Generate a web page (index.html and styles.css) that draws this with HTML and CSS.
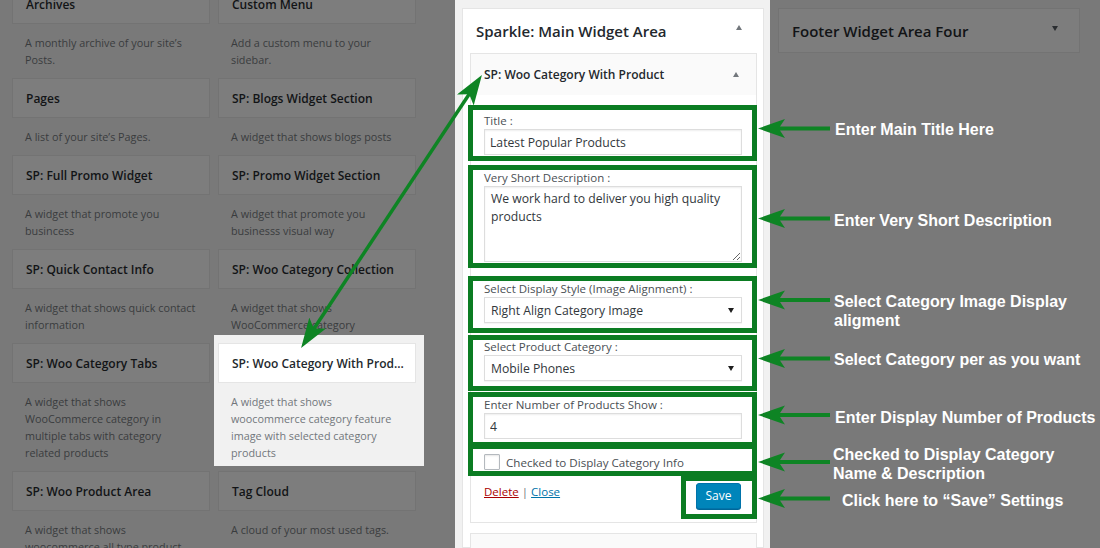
FILE: index.html
```html
<!DOCTYPE html>
<html lang="en">
<head>
<meta charset="utf-8">
<title>Widgets</title>
<link rel="stylesheet" href="styles.css">
</head>
<body>
<div class="page">
  <div class="available">
    <div class="col">
      <div class="w-title">Archives</div>
      <div class="w-desc">A monthly archive of your site’s<br>Posts.</div>
      <div class="w-title">Pages</div>
      <div class="w-desc">A list of your site’s Pages.</div>
      <div class="w-title">SP: Full Promo Widget</div>
      <div class="w-desc">A widget that promote you<br>busincess</div>
      <div class="w-title">SP: Quick Contact Info</div>
      <div class="w-desc">A widget that shows quick contact<br>information</div>
      <div class="w-title">SP: Woo Category Tabs</div>
      <div class="w-desc">A widget that shows<br>WooCommerce category in<br>multiple tabs with category<br>related products</div>
      <div class="w-title">SP: Woo Product Area</div>
      <div class="w-desc">A widget that shows<br>woocommerce all type product</div>
    </div>
    <div class="col">
      <div class="w-title">Custom Menu</div>
      <div class="w-desc">Add a custom menu to your<br>sidebar.</div>
      <div class="w-title">SP: Blogs Widget Section</div>
      <div class="w-desc">A widget that shows blogs posts</div>
      <div class="w-title">SP: Promo Widget Section</div>
      <div class="w-desc">A widget that promote you<br>businesss visual way</div>
      <div class="w-title">SP: Woo Category Collection</div>
      <div class="w-desc">A widget that shows<br>WooCommerce category</div>
      <div class="hl">
        <div class="w-title">SP: Woo Category With Prod...</div>
        <div class="w-desc">A widget that shows<br>woocommerce category feature<br>image with selected category<br>products</div>
      </div>
      <div class="w-title">Tag Cloud</div>
      <div class="w-desc">A cloud of your most used tags.</div>
    </div>
  </div>

  <div class="main-col">
    <div class="sidebar">
      <div class="sb-head">
        <h2 class="sb-title">Sparkle: Main Widget Area</h2>
        <span class="tri-up"></span>
      </div>
      <div class="ow">
        <div class="ow-head">
          <span>SP: Woo Category With Product</span>
          <span class="tri-up small"></span>
        </div>
        <div class="ow-inside">
          <div class="field f-title">
            <label class="f-label">Title :</label>
            <input class="f-input" type="text" value="Latest Popular Products">
          </div>
          <div class="field f-desc">
            <label class="f-label">Very Short Description :</label>
            <textarea class="f-area">We work hard to deliver you high quality products</textarea>
          </div>
          <div class="field f-sel">
            <label class="f-label">Select Display Style (Image Alignment) :</label>
            <div class="f-select"><span>Right Align Category Image</span><span class="tri-down dark"></span></div>
          </div>
          <div class="field f-sel">
            <label class="f-label">Select Product Category :</label>
            <div class="f-select"><span>Mobile Phones</span><span class="tri-down dark"></span></div>
          </div>
          <div class="field f-num">
            <label class="f-label">Enter Number of Products Show :</label>
            <input class="f-input" type="text" value="4">
          </div>
          <div class="check-row">
            <span class="checkbox"></span>
            <span>Checked to Display Category Info</span>
          </div>
          <div class="actions">
            <div class="links"><a class="del" href="#">Delete</a> <span class="sep">|</span> <a class="close" href="#">Close</a></div>
            <button class="save" type="button">Save</button>
          </div>
        </div>
      </div>
      <div class="next-widget"></div>
    </div>
  </div>

  <div class="right-col">
    <div class="footer-area">
      <span>Footer Widget Area Four</span>
      <span class="tri-down"></span>
    </div>
  </div>

  <div class="annot">
    <div class="gbox gb1"></div>
    <div class="gbox gb2"></div>
    <div class="gbox gb3"></div>
    <div class="gbox gb4"></div>
    <div class="gbox gb5"></div>
    <div class="gbox gb6"></div>
    <div class="gbox gb7"></div>

    <svg class="arrows" width="1100" height="548" viewBox="0 0 1100 548">
      <defs>
        <path id="ha" d="M0 0 L27 -9.5 L22 -2 L72 -2 L72 2 L22 2 L27 9.5 Z"/>
        <marker id="dh" markerUnits="userSpaceOnUse" viewBox="0 0 30 20" markerWidth="30" markerHeight="20" refX="20" refY="10" orient="auto-start-reverse">
          <path d="M0 0 L30 10 L0 20 L7 10 Z" fill="#0e8424"/>
        </marker>
      </defs>
      <g fill="#0e8424">
        <use href="#ha" x="758" y="128.5"/>
        <use href="#ha" x="758" y="218.5"/>
        <use href="#ha" x="758" y="300"/>
        <use href="#ha" x="758" y="358.5"/>
        <use href="#ha" x="758" y="415"/>
        <use href="#ha" x="758" y="462"/>
        <use href="#ha" x="758" y="498.5"/>
      </g>
      <line x1="306.6" y1="339.7" x2="476.4" y2="83.3" stroke="#0e8424" stroke-width="3.5" marker-start="url(#dh)" marker-end="url(#dh)"/>
    </svg>

    <div class="note n1">Enter Main Title Here</div>
    <div class="note n2">Enter Very Short Description</div>
    <div class="note n3">Select Category Image Display<br>aligment</div>
    <div class="note n4">Select Category per as you want</div>
    <div class="note n5">Enter Display Number of Products</div>
    <div class="note n6">Checked to Display Category<br>Name &amp; Description</div>
    <div class="note n7">Click here to “Save” Settings</div>
  </div>
</div>
</body>
</html>
```

FILE: styles.css
```css
* { box-sizing: border-box; margin: 0; padding: 0; }

html, body {
  width: 1100px;
  height: 548px;
  overflow: hidden;
}

body {
  font-family: "Open Sans", "Noto Sans", sans-serif;
  background: #797979;
  color: #23282d;
}

.page {
  position: relative;
  display: flex;
  width: 1100px;
  height: 548px;
  overflow: hidden;
}

/* ---------- available widgets (dimmed) ---------- */
.available {
  width: 455px;
  flex: none;
  display: flex;
  align-items: flex-start;
  gap: 8px;
  padding-left: 12px;
  margin-top: -16px;
}

.col {
  width: 198px;
  display: flex;
  flex-direction: column;
}

.w-title {
  height: 40px;
  border: 1px solid #737373;
  background: #7d7d7d;
  padding: 2px 13px 0;
  font-size: 12px;
  font-weight: 600;
  line-height: 36px;
  color: #121416;
  white-space: nowrap;
}

.w-desc {
  padding: 10px 6px 10px 13px;
  font-size: 10.8px;
  line-height: 17px;
  color: #393c3e;
  white-space: nowrap;
}

.hl {
  background: #f1f1f1;
  margin: -8px -8px 5px -4px;
  padding: 8px 8px 0 4px;
}

.hl .w-title {
  background: #fff;
  border-color: #e5e5e5;
  color: #23282d;
}

.hl .w-desc {
  color: #72777c;
  padding-bottom: 5px;
}

/* ---------- main sidebar (highlighted) ---------- */
.main-col {
  width: 315px;
  flex: none;
  background: #f1f1f1;
  padding: 8px 6px 0 7px;
}

.sidebar {
  background: #fff;
  border: 1px solid #e5e5e5;
  height: 100%;
  padding: 0 6px 0 7px;
}

.sb-head {
  height: 44px;
  display: flex;
  align-items: center;
  justify-content: space-between;
  padding: 0 15px 0 6px;
}

.sb-title {
  font-size: 15px;
  font-weight: 600;
  color: #23282d;
  line-height: 20px;
}

.tri-up {
  width: 0;
  height: 0;
  border-left: 3.5px solid transparent;
  border-right: 3.5px solid transparent;
  border-bottom: 5px solid #72777c;
  margin-top: -7px;
}

.tri-up.small {
  margin-top: -1px;
}

.tri-down {
  width: 0;
  height: 0;
  border-left: 3.5px solid transparent;
  border-right: 3.5px solid transparent;
  border-top: 5px solid #2b2e31;
  margin-top: -5px;
}

.tri-down.dark {
  border-top-color: #1e1e1e;
  margin-top: 0;
}

.ow {
  border: 1px solid #e5e5e5;
  margin-bottom: 10px;
}

.ow-head {
  height: 41px;
  background: #fafafa;
  display: flex;
  align-items: center;
  justify-content: space-between;
  padding: 0 17px 0 13px;
  font-size: 12px;
  font-weight: 600;
  color: #23282d;
}

.ow-inside {
  background: #fff;
  padding: 18px 14px 13px 13px;
  display: flex;
  flex-direction: column;
}

.field {
  display: flex;
  flex-direction: column;
}

.f-title { margin-bottom: 15px; }
.f-desc { margin-bottom: 19px; }
.f-sel { margin-bottom: 16px; }
.f-num { margin-bottom: 15px; }

.f-label {
  font-size: 11.5px;
  line-height: 16px;
  color: #4a4f54;
}

.f-input {
  display: block;
  width: 100%;
  height: 26px;
  border: 1px solid #ddd;
  box-shadow: inset 0 1px 2px rgba(0, 0, 0, 0.07);
  background: #fff;
  padding: 0 5px;
  font-family: "Open Sans", "Noto Sans", sans-serif;
  font-size: 12.2px;
  color: #32373c;
  outline: none;
}

.f-area {
  display: block;
  width: 100%;
  height: 76px;
  border: 1px solid #ddd;
  box-shadow: inset 0 1px 2px rgba(0, 0, 0, 0.07);
  background: #fff;
  padding: 3px 6px;
  font-family: "Open Sans", "Noto Sans", sans-serif;
  font-size: 12.2px;
  line-height: 18px;
  color: #32373c;
  resize: vertical;
  outline: none;
}

.f-select {
  height: 26px;
  border: 1px solid #ddd;
  box-shadow: 0 1px 1px rgba(0, 0, 0, 0.04);
  background: #fff;
  display: flex;
  align-items: center;
  justify-content: space-between;
  padding: 0 7px 0 6px;
  font-size: 12.2px;
  color: #32373c;
}

.check-row {
  display: flex;
  align-items: center;
  gap: 6px;
  height: 16px;
  font-size: 11.6px;
  color: #4a4f54;
  margin-bottom: 13px;
}

.checkbox {
  width: 16px;
  height: 16px;
  border: 1px solid #b4b9be;
  border-radius: 1px;
  background: #fff;
  box-shadow: inset 0 1px 2px rgba(0, 0, 0, 0.1);
}

.actions {
  display: flex;
  justify-content: space-between;
  align-items: flex-start;
}

.links {
  font-size: 11.5px;
  line-height: 16px;
  color: #72777c;
  padding-top: 1px;
}

.del { color: #a00; }
.close { color: #0073aa; }
.sep { color: #72777c; }

.save {
  width: 45px;
  height: 26px;
  margin-right: 1px;
  background: #0085ba;
  border: 1px solid #0073aa;
  border-radius: 3px;
  box-shadow: 0 1px 0 #006799;
  color: #fff;
  font-family: "Open Sans", "Noto Sans", sans-serif;
  font-size: 12px;
  line-height: 22px;
}

.next-widget {
  height: 40px;
  background: #fafafa;
  border: 1px solid #e5e5e5;
}

/* ---------- right (dimmed) ---------- */
.right-col {
  flex: 1;
  padding: 8px 0 0 8px;
}

.footer-area {
  width: 302px;
  height: 45px;
  background: #7d7d7d;
  border: 1px solid #737373;
  display: flex;
  align-items: center;
  justify-content: space-between;
  padding: 0 21px 0 13px;
  font-size: 15px;
  font-weight: 600;
  color: #121416;
}

/* ---------- annotation layer ---------- */
.annot {
  position: absolute;
  inset: 0;
  pointer-events: none;
}

.arrows {
  position: absolute;
  left: 0;
  top: 0;
}

.gbox {
  position: absolute;
  border: 5px solid #0b7c22;
  left: 468px;
  width: 289px;
}

.gb1 { top: 105px; height: 56px; }
.gb2 { top: 165px; height: 103px; }
.gb3 { top: 276px; height: 57px; }
.gb4 { top: 335px; height: 56px; }
.gb5 { top: 392px; height: 55px; }
.gb6 { top: 444px; height: 32px; }
.gb7 { top: 476px; left: 681px; width: 76px; height: 43px; }

.note {
  position: absolute;
  font-family: "Liberation Sans", Arial, sans-serif;
  font-weight: 700;
  font-size: 16px;
  line-height: 19px;
  color: #fff;
  white-space: nowrap;
}

.n1 { left: 835px; top: 120px; }
.n2 { left: 834px; top: 211px; }
.n3 { left: 834px; top: 292px; }
.n4 { left: 834px; top: 350px; }
.n5 { left: 835px; top: 408px; }
.n6 { left: 833px; top: 445px; }
.n7 { left: 842px; top: 491px; }
```
